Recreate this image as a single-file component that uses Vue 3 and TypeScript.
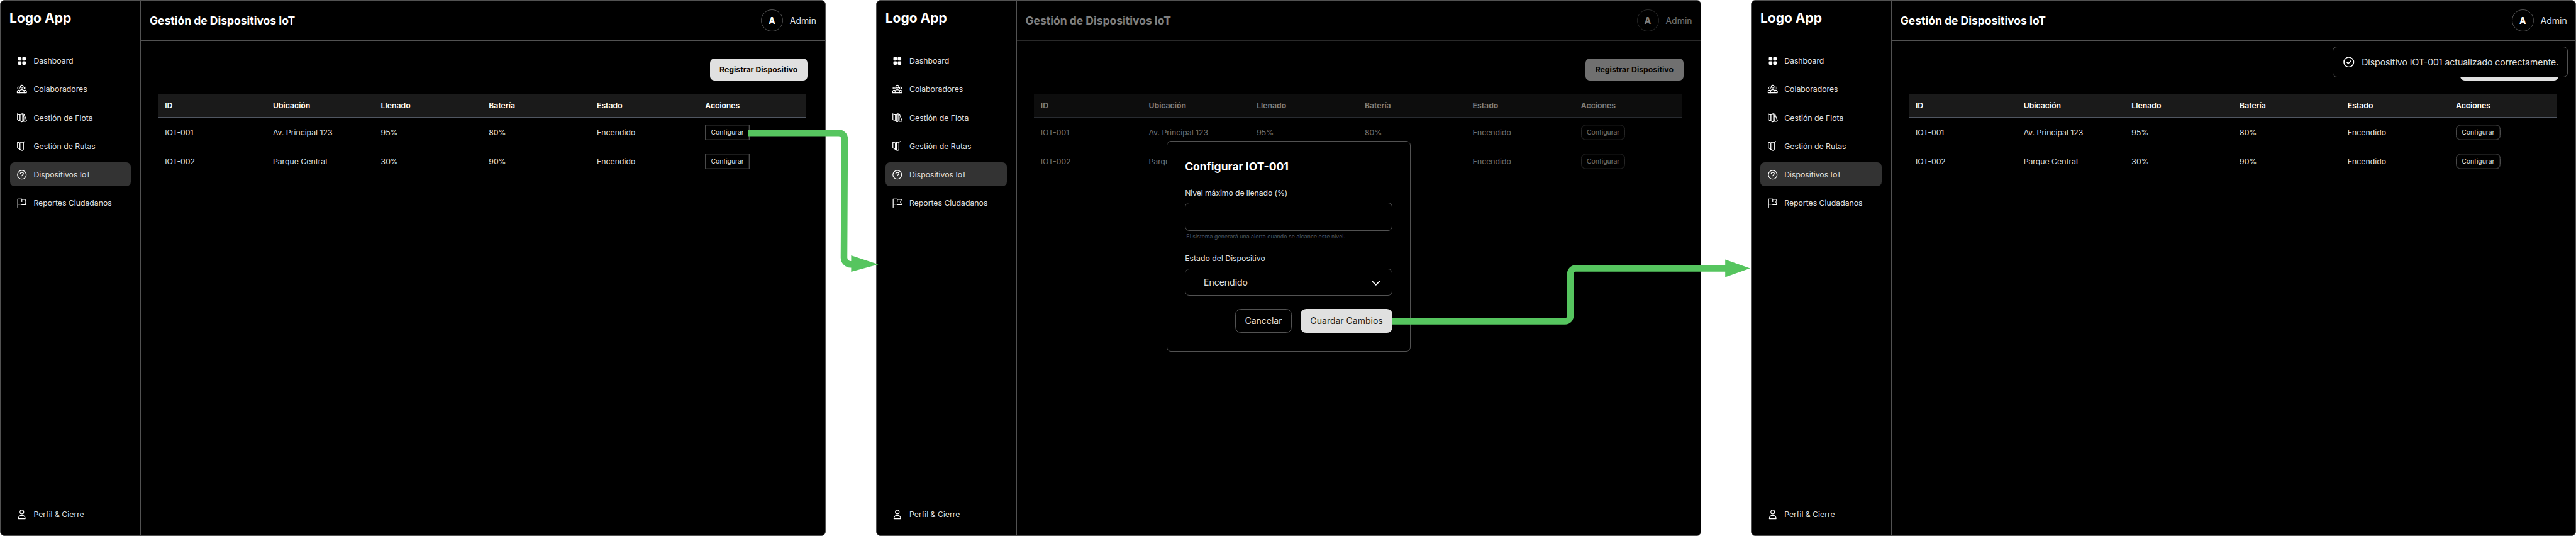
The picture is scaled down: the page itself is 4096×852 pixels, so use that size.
<script setup lang="ts">
interface NavItem { label: string; icon: string; active?: boolean }
interface Device { id: string; location: string; fill: string; battery: string; status: string }
interface Screen { key: string; squareActions: boolean; modal: boolean; toast: boolean }

const nav: NavItem[] = [
  { label: 'Dashboard', icon: 'grid' },
  { label: 'Colaboradores', icon: 'people' },
  { label: 'Gestión de Flota', icon: 'fleet' },
  { label: 'Gestión de Rutas', icon: 'routes' },
  { label: 'Dispositivos IoT', icon: 'help', active: true },
  { label: 'Reportes Ciudadanos', icon: 'flag' }
]
const columns = ['ID', 'Ubicación', 'Llenado', 'Batería', 'Estado', 'Acciones']
const devices: Device[] = [
  { id: 'IOT-001', location: 'Av. Principal 123', fill: '95%', battery: '80%', status: 'Encendido' },
  { id: 'IOT-002', location: 'Parque Central', fill: '30%', battery: '90%', status: 'Encendido' }
]
const screens: Screen[] = [
  { key: 'list', squareActions: true, modal: false, toast: false },
  { key: 'edit', squareActions: false, modal: true, toast: false },
  { key: 'done', squareActions: false, modal: false, toast: true }
]
</script>

<template>
  <div class="board">
    <section v-for="s in screens" :key="s.key" class="screen" :class="s.key">
      <aside class="sidebar">
        <div class="logo">Logo App</div>
        <nav class="nav">
          <a v-for="n in nav" :key="n.label" class="nav-item" :class="{ active: n.active }">
            <svg class="icon" viewBox="0 0 20 20">
              <g v-if="n.icon === 'grid'" class="solid">
                <rect x="2.9" y="3" width="6.4" height="6.3" rx="1.6" />
                <rect x="10.8" y="3" width="6.4" height="6.3" rx="1.6" />
                <rect x="2.9" y="10.8" width="6.4" height="6.3" rx="1.6" />
                <rect x="10.8" y="10.8" width="6.4" height="6.3" rx="1.6" />
              </g>
              <g v-else-if="n.icon === 'people'">
                <circle cx="10" cy="5.4" r="2.6" />
                <circle cx="4.1" cy="7.9" r="1.8" />
                <circle cx="15.9" cy="7.9" r="1.8" />
                <path d="M1.6 16.6h16.8v-2.1a2.6 2.6 0 0 0-4.3-2M1.6 16.6v-2.1a2.6 2.6 0 0 1 4.3-2" />
                <path d="M6 16.6v-2.2a4 3.4 0 0 1 8 0v2.2" />
              </g>
              <g v-else-if="n.icon === 'fleet'">
                <path d="M2 3.3v10.3l2.6 2.2 3 1M2 3.3l2 1.6h3l3-1.5c2.6-.3 4.2.9 5 3.2l3.3 8.3c.5 1.5-.4 2.2-1.8 2.2h-3.2" />
                <path d="M6.6 5.2v10.8" />
                <path d="M8.3 5v11.6c0 1.6 3.2 1.6 3.2 0V5c0-1.2-3.2-1.2-3.2 0z" />
                <path d="M12.7 5.3c1.1 3 1.2 7.6.6 11.2" />
              </g>
              <g v-else-if="n.icon === 'routes'">
                <path d="M2 3.2v10.6l4.5 2.7V5z" />
                <path d="M6.5 5l2.2-1.3h4.2l2.4-1.5M12.9 3.8v12.3c0 1.5-1.2 2.3-2.5 2.3-1.5 0-3-.8-3.9-1.9M8.5 4.2v13" />
              </g>
              <g v-else-if="n.icon === 'help'">
                <circle cx="10" cy="10" r="7.9" />
                <path d="M7.2 8.2c0-3.2 5.7-3.2 5.7-.2 0 2-2.8 1.9-2.8 3.9" />
                <circle class="dot" cx="10.1" cy="14.2" r=".35" />
              </g>
              <g v-else>
                <path d="M2.5 17.7V2.6H10v4.7M10 3.3h7.7l-1.9 4.8 1.9 4.9H10l-.8-.9H2.5" />
              </g>
            </svg>
            <span>{{ n.label }}</span>
          </a>
        </nav>
        <a class="nav-item profile">
          <svg class="icon" viewBox="0 0 20 20">
            <circle cx="10" cy="5.6" r="3.4" />
            <path d="M3.9 17.8c0-3.9 2.5-6 6.1-6s6.1 2.1 6.1 6z" />
          </svg>
          <span>Perfil &amp; Cierre</span>
        </a>
      </aside>

      <div class="content">
        <header class="topbar">
          <h1>Gestión de Dispositivos IoT</h1>
          <div class="user">
            <div class="avatar">A</div>
            <span>Admin</span>
          </div>
        </header>
        <main class="main">
          <div class="toolbar">
            <button class="register" type="button">Registrar Dispositivo</button>
          </div>
          <div class="table">
            <div class="row head">
              <div v-for="c in columns" :key="c">{{ c }}</div>
            </div>
            <div v-for="d in devices" :key="d.id" class="row">
              <div>{{ d.id }}</div>
              <div>{{ d.location }}</div>
              <div>{{ d.fill }}</div>
              <div>{{ d.battery }}</div>
              <div>{{ d.status }}</div>
              <div>
                <button class="configure" :class="{ square: s.squareActions }" type="button">Configurar</button>
              </div>
            </div>
          </div>
        </main>
        <div v-if="s.modal" class="backdrop"></div>
      </div>

      <div v-if="s.modal" class="modal">
        <h2>Configurar IOT-001</h2>
        <label class="label tight">Nivel máximo de llenado (%)</label>
        <div class="field input"></div>
        <p class="hint">El sistema generará una alerta cuando se alcance este nivel.</p>
        <label class="label">Estado del Dispositivo</label>
        <div class="field select">
          <span>Encendido</span>
          <svg class="chevron" viewBox="0 0 14 9"><path d="M1.2 1.4L7 7.2l5.8-5.8" /></svg>
        </div>
        <div class="actions">
          <button class="cancel" type="button">Cancelar</button>
          <button class="save" type="button">Guardar Cambios</button>
        </div>
      </div>

      <div v-if="s.toast" class="toast">
        <svg class="check" viewBox="0 0 18 18">
          <circle cx="9" cy="9" r="8" />
          <path d="M5.9 9.2l2.2 2.1 4.3-4.3" />
        </svg>
        <span>Dispositivo IOT-001 actualizado correctamente.</span>
      </div>
    </section>

    <svg class="flow" viewBox="0 0 4096 852">
      <path class="line" d="M1189.600 211.200H1333.300a9.700 9.700 0 0 1 9.700 9.700L1342 409.500a10.700 10.700 0 0 0 10.700 10.700H1356" />
      <path class="tip" d="M1353.400 406v26l43.200-11.800z" />
      <path class="line" d="M2213.100 510.500H2488.600a8.500 8.500 0 0 0 8.500-8.500V435a8.500 8.500 0 0 1 8.500-8.500H2745" />
      <path class="tip" d="M2743.200 412.500v28L2782.700 426.500z" />
    </svg>
  </div>
</template>

<style>
html,
body {
  background: #fff;
  overflow: hidden;
}
</style>

<style scoped>
* {
  box-sizing: border-box;
}

.board {
  position: relative;
  display: flex;
  width: 4096px;
  height: 852px;
  font-family: Inter, "Liberation Sans", sans-serif;
  font-size: 12.25px;
  color: #e0e0e0;
  overflow: hidden;
}

.screen {
  position: relative;
  flex: none;
  display: flex;
  width: 1312.5px;
  height: 852px;
  border: 1px solid #525252;
  border-radius: 7px;
  background: #000;
  overflow: hidden;
}

.screen.edit {
  margin-left: 80.1px;
}

.screen.done {
  margin-left: 78.7px;
}

.sidebar {
  flex: none;
  display: flex;
  flex-direction: column;
  width: 223px;
  padding: 14.2px 14.6px 14.1px;
  border-right: 1px solid #525252;
}

.logo {
  margin-left: -0.5px;
  font-size: 21px;
  font-weight: 700;
  line-height: 28px;
  color: #fff;
}

.nav {
  display: flex;
  flex-direction: column;
  gap: 6.95px;
  margin-top: 34.5px;
}

.nav-item {
  display: flex;
  align-items: center;
  gap: 10px;
  width: 192.8px;
  height: 38.2px;
  padding-left: 10.3px;
  border-radius: 7px;
  white-space: nowrap;
}

.nav-item.active {
  background: #333;
}

.profile {
  margin-top: auto;
}

.icon {
  flex: none;
  width: 17.5px;
  height: 17.5px;
  fill: none;
  stroke: #fff;
  stroke-width: 1.4;
  stroke-linejoin: round;
  stroke-linecap: round;
}

.solid {
  fill: #fff;
  stroke: none;
}

.dot {
  fill: #fff;
  stroke-width: 0.9;
}

.content {
  position: relative;
  flex: 1;
  display: flex;
  flex-direction: column;
  min-width: 0;
}

.topbar {
  display: flex;
  align-items: center;
  justify-content: space-between;
  height: 64px;
  padding: 0 13.5px 0 13.9px;
  border-bottom: 1px solid #525252;
  box-shadow: inset 0 -1px 0 #1c1c1c;
}

h1,
h2 {
  margin: 0;
  font-size: 17.5px;
  font-weight: 700;
  color: #fff;
}

.user {
  display: flex;
  align-items: center;
  gap: 10.9px;
  font-size: 14px;
}

.avatar {
  display: flex;
  align-items: center;
  justify-content: center;
  width: 35px;
  height: 35px;
  border: 1px solid #525252;
  border-radius: 50%;
  font-weight: 700;
  color: #fff;
}

button {
  padding: 0;
  border: 0;
  font: inherit;
  color: inherit;
  background: none;
}

.main {
  flex: 1;
  padding: 28.1px 27.6px 0 27.9px;
}

.toolbar {
  display: flex;
  justify-content: flex-end;
}

.register {
  width: 155.4px;
  height: 34.8px;
  border-radius: 7px;
  background: #e0e0e0;
  color: #0a0a0a;
  font-weight: 700;
}

.table {
  width: 1030.2px;
  margin-top: 20.7px;
}

.row {
  display: grid;
  grid-template-columns: repeat(6, 1fr);
  align-items: center;
  height: 46.1px;
  border-bottom: 1px solid #10151c;
}

.row > div {
  padding-left: 10.3px;
}

.row > div:last-child {
  padding-left: 10.8px;
}

.row.head {
  height: 39.4px;
  border-bottom: 2px solid #505661;
  background: #1a1a1a;
  font-weight: 600;
  color: #fff;
}

.configure {
  display: block;
  width: 70.7px;
  height: 24.3px;
  border: 1px solid #4a4a4a;
  border-radius: 7.5px;
  box-shadow: inset 0 0 0 0.5px #3a3a3a;
  font-size: 10.5px;
  letter-spacing: -0.08px;
}

.configure.square {
  border-radius: 0;
}

.backdrop {
  position: absolute;
  inset: -1px 0 -1px 0;
  background: rgba(0, 0, 0, 0.5);
}

.modal {
  position: absolute;
  left: 461.2px;
  top: 222.5px;
  display: flex;
  flex-direction: column;
  width: 388.6px;
  height: 335.3px;
  padding: 27.6px 28.4px 0;
  border: 1px solid #525252;
  border-radius: 7px;
  background: #000;
}

.modal h2 {
  line-height: 26px;
}

.label {
  margin-top: 21px;
  line-height: 16px;
}

.label.tight {
  letter-spacing: -0.1px;
}

.field {
  display: flex;
  align-items: center;
  justify-content: space-between;
  border: 1px solid #525252;
  border-radius: 7px;
}

.input {
  height: 45px;
  margin-top: 7.4px;
}

.hint {
  margin: 2.7px 0 0.2px 2.2px;
  font-size: 8.75px;
  letter-spacing: 0.055px;
  line-height: 12px;
  white-space: nowrap;
  color: #4b5563;
}

.select {
  height: 43.4px;
  margin-top: 7.4px;
  padding: 0 18.6px 0 28.8px;
  font-size: 14px;
}

.chevron {
  width: 13.5px;
  height: 8.7px;
  margin-top: 3px;
  fill: none;
  stroke: #fff;
  stroke-width: 1.8;
  stroke-linecap: round;
  stroke-linejoin: round;
}

.actions {
  display: flex;
  justify-content: flex-end;
  gap: 14px;
  margin-top: 20.5px;
  font-size: 14px;
}

.cancel,
.save {
  height: 38.5px;
  border-radius: 8.75px;
}

.cancel {
  width: 90.1px;
  border: 1px solid #525252;
}

.save {
  width: 146px;
  background: #e0e0e0;
  color: #1a1a1a;
}

.toast {
  position: absolute;
  right: 12px;
  top: 73px;
  display: flex;
  align-items: center;
  gap: 11.5px;
  width: 374.4px;
  height: 48.5px;
  padding-left: 16.3px;
  border: 1px solid #525252;
  border-radius: 7px;
  background: #000;
  font-size: 14px;
  white-space: nowrap;
}

.check {
  flex: none;
  width: 17.5px;
  height: 17.5px;
  fill: none;
  stroke: #fff;
  stroke-width: 1.6;
  stroke-linecap: round;
  stroke-linejoin: round;
}

.flow {
  position: absolute;
  left: 0;
  top: 0;
  width: 4096px;
  height: 852px;
}

.line {
  fill: none;
  stroke: #56c55f;
  stroke-width: 10.5;
}

.tip {
  fill: #56c55f;
}
</style>
